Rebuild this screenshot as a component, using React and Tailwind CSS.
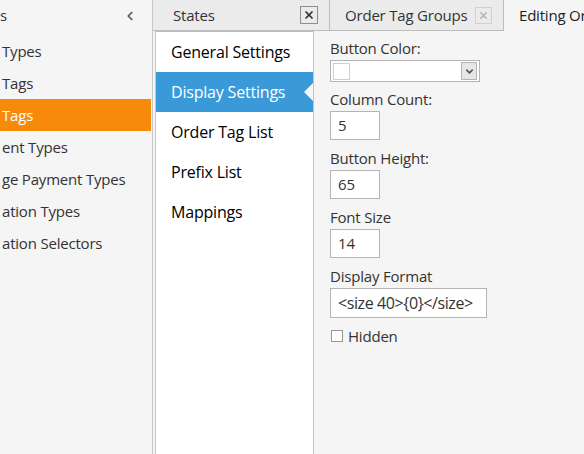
import { ChevronLeft, ChevronDown, X } from "lucide-react";

const font = { fontFamily: "'Open Sans', 'Noto Sans', sans-serif" };

const navItems = [
  { label: "Types", active: false },
  { label: "Tags", active: false },
  { label: "Tags", active: true },
  { label: "ent Types", active: false },
  { label: "ge Payment Types", active: false },
  { label: "ation Types", active: false },
  { label: "ation Selectors", active: false },
];

const sections = ["General Settings", "Display Settings", "Order Tag List", "Prefix List", "Mappings"];

function Field({ label, children }) {
  return (
    <div className="flex flex-col">
      <div className="text-[15px] leading-[20px] text-[#333] mb-[2px]">{label}</div>
      {children}
    </div>
  );
}

export default function App() {
  return (
    <div className="w-[584px] h-[454px] flex overflow-hidden bg-[#f5f5f5] text-[#222] tracking-[-0.2px]" style={font}>
      {/* left menu */}
      <div className="w-[153px] shrink-0 border-r border-[#c6c6c6] pr-[1px]">
        <div className="h-[31px] flex items-center justify-between pr-[14px] text-[15px] text-[#333]">
          <span>s</span>
          <ChevronLeft size={14} strokeWidth={3} className="text-[#555]" />
        </div>
        <div className="flex flex-col pt-[4px]">
          {navItems.map((it, i) => (
            <div
              key={i}
              className={`h-[32px] flex items-center pl-[2px] text-[15px] whitespace-nowrap ${
                it.active ? "bg-[#f88a0b] text-white" : "text-[#333]"
              }`}
            >
              {it.label}
            </div>
          ))}
        </div>
      </div>

      <div className="flex-1 flex flex-col min-w-0">
        {/* tabs */}
        <div className="h-[31px] flex shrink-0">
          <div className="w-[177px] flex items-center justify-between bg-[#ebebeb] border-r border-b border-[#bdbdbd] pl-[20px] pr-[11px] text-[15px] text-[#333]">
            <span>States</span>
            <span className="w-[18px] h-[18px] border border-[#8f8f8f] flex items-center justify-center">
              <X size={12} strokeWidth={3.5} className="text-[#333]" />
            </span>
          </div>
          <div className="w-[174px] flex items-center justify-between bg-[#ebebeb] border-r border-b border-[#bdbdbd] pl-[15px] pr-[11px] text-[15px] text-[#333]">
            <span className="whitespace-nowrap">Order Tag Groups</span>
            <span className="w-[17px] h-[17px] border border-[#d0d0d0] flex items-center justify-center">
              <X size={11} strokeWidth={3} className="text-[#b0b0b0]" />
            </span>
          </div>
          <div className="flex-1 flex items-center pl-[15px] text-[15px] text-[#222] whitespace-nowrap overflow-hidden">
            Editing Order Tag Group
          </div>
        </div>

        <div className="flex-1 flex pl-[2px]">
          {/* section list */}
          <div className="w-[159px] shrink-0 bg-white border-l border-r border-[#c4c4c4] border-t border-t-[#bdbdbd]">
            {sections.map((s, i) => (
              <div
                key={s}
                className={`relative h-[40px] flex items-center pl-[15px] text-[16px] ${
                  i === 1 ? "bg-[#3a9ad9] text-white" : "text-black"
                }`}
              >
                {s}
                {i === 1 && (
                  <span className="absolute right-0 top-[11px] w-0 h-0 border-y-[9px] border-y-transparent border-r-[9px] border-r-[#f5f5f5]" />
                )}
              </div>
            ))}
          </div>

          {/* settings */}
          <div className="flex-1 pl-[16px] pt-[7px] flex flex-col gap-[8px] text-[15px]">
            <Field label="Button Color:">
              <div className="w-[150px] h-[22px] mb-[-1px] bg-white border border-[#b4b4b4] flex items-center justify-between px-[2px]">
                <span className="w-[17px] h-[17px] border border-[#cfcfcf]" />
                <span className="w-[16px] h-[18px] bg-[#e6e6e6] border border-[#b4b4b4] flex items-center justify-center">
                  <ChevronDown size={11} strokeWidth={3.5} className="text-[#555]" />
                </span>
              </div>
            </Field>
            <Field label="Column Count:">
              <div className="w-[50px] h-[29px] bg-white border border-[#b4b4b4] flex items-center pl-[7px] text-[15px] text-[#333]">5</div>
            </Field>
            <Field label="Button Height:">
              <div className="w-[50px] h-[29px] bg-white border border-[#b4b4b4] flex items-center pl-[7px] text-[15px] text-[#333]">65</div>
            </Field>
            <Field label="Font Size">
              <div className="w-[50px] h-[29px] bg-white border border-[#b4b4b4] flex items-center pl-[7px] text-[15px] text-[#333]">14</div>
            </Field>
            <Field label="Display Format">
              <div className="w-[157px] h-[30px] bg-white border border-[#b4b4b4] flex items-center pl-[7px] text-[16px] tracking-[-0.4px] text-[#333] whitespace-nowrap">
                {"<size 40>{0}</size>"}
              </div>
            </Field>
            <div className="flex items-center gap-[5px] -mt-[1px] pl-[1px]">
              <span className="w-[12px] h-[12px] border border-[#999] bg-white" />
              <span className="text-[15px] text-[#333]">Hidden</span>
            </div>
          </div>
        </div>
      </div>
    </div>
  );
}
